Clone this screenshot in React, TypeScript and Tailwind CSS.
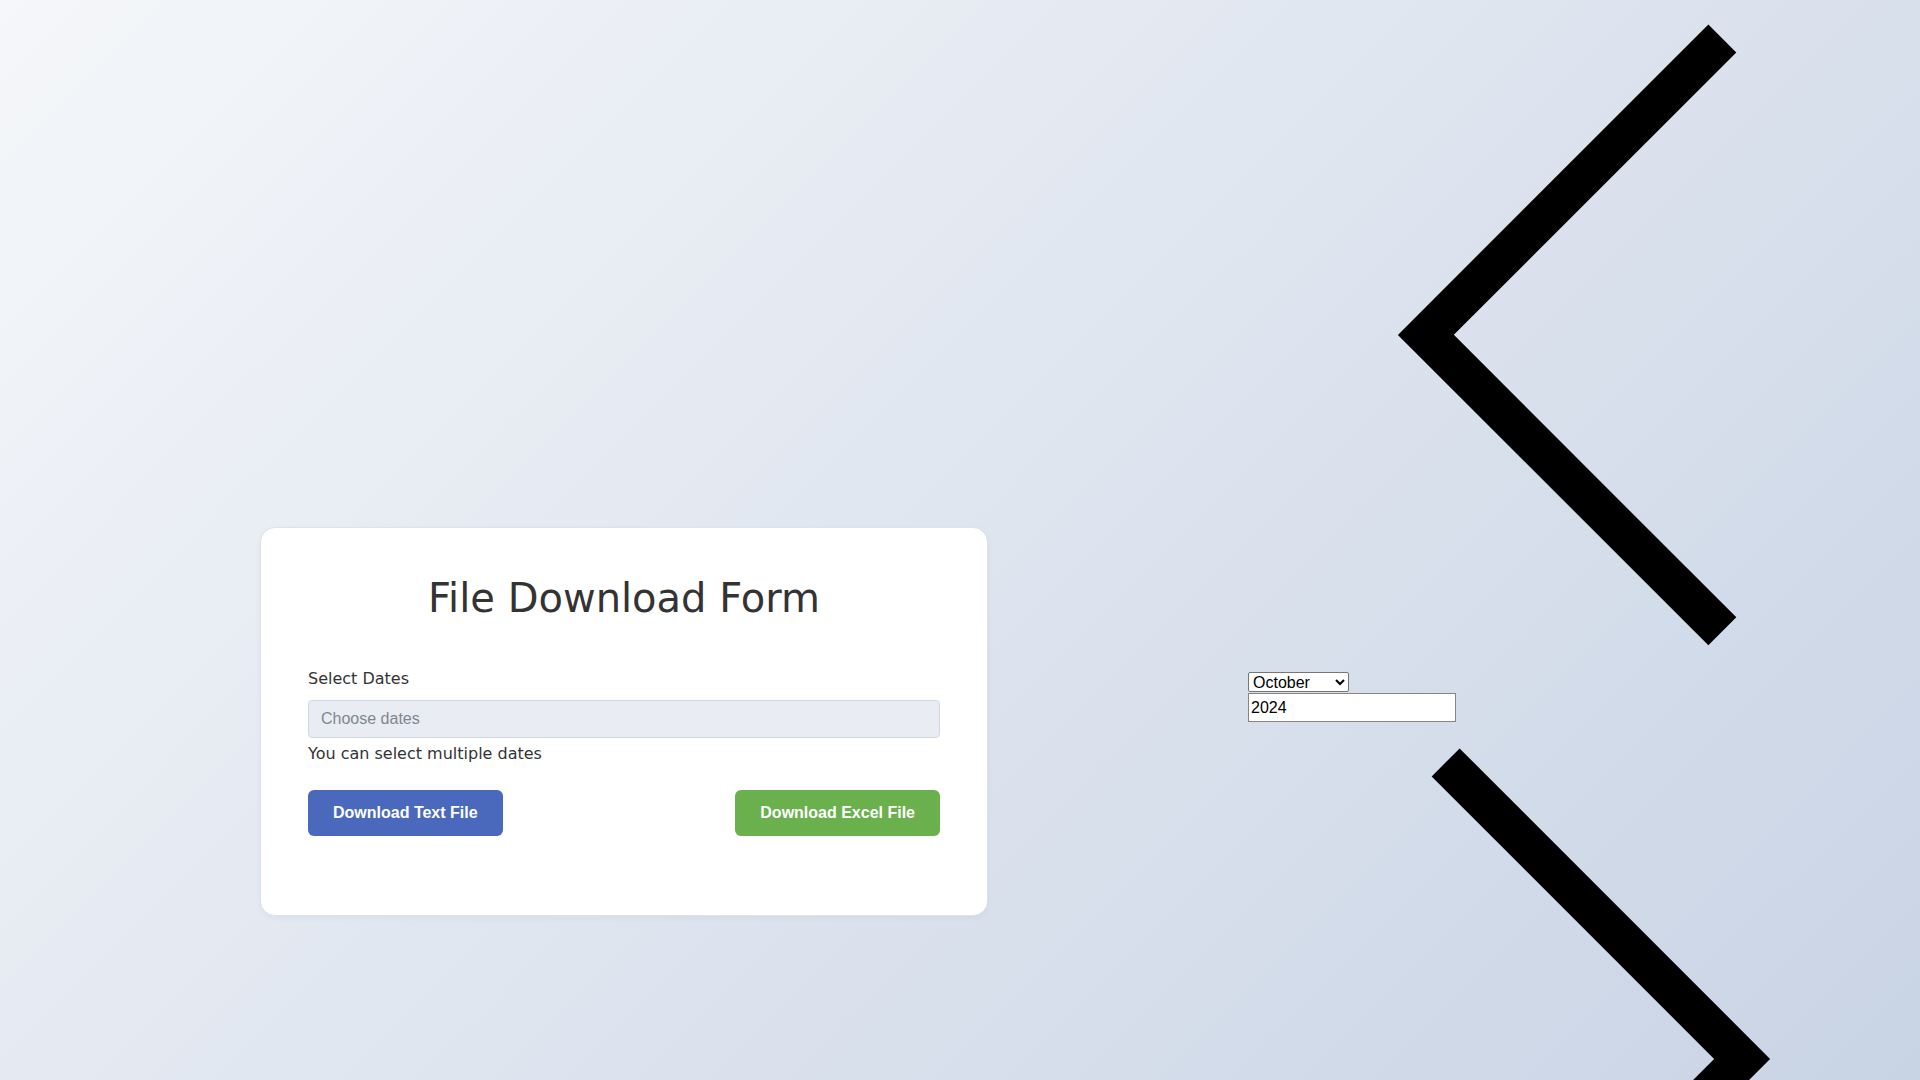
import React from 'react';

const months = [
  'January', 'February', 'March', 'April', 'May', 'June',
  'July', 'August', 'September', 'October', 'November', 'December',
];

const PrevArrow = () => (
  <svg viewBox="0 0 17 17" className="block w-[672px] h-[672px]" xmlns="http://www.w3.org/2000/svg">
    <path d="M5.207 8.471l7.146 7.147-0.707 0.707-7.854-7.853 7.854-7.854 0.707 0.707-7.146 7.146z" fill="#000" />
  </svg>
);

const NextArrow = () => (
  <svg viewBox="0 0 17 17" className="block w-[672px] h-[672px]" xmlns="http://www.w3.org/2000/svg">
    <path d="M13.207 8.472l-7.854 7.854-0.707-0.707 7.146-7.146-7.146-7.148 0.707-0.707 7.854 7.854z" fill="#000" />
  </svg>
);

export default function App() {
  return (
    <div className="min-h-[1443px] w-full flex items-center bg-[linear-gradient(135deg,#f5f7fa_0%,#c3cfe2_100%)]">
      {/* form column */}
      <div className="flex-1 flex justify-center">
        <div className="w-[728px] rounded-[15px] border border-[#dde3ea] bg-white px-[47px] pt-[47px] pb-[79px] shadow-[0_2px_6px_rgba(0,0,0,0.04)] font-['DejaVu_Sans',sans-serif] text-[#333]">
          <h1 className="text-center text-[40px] leading-[normal] font-normal">File Download Form</h1>

          <label className="block mt-[48px] text-[16px] leading-[normal]">Select Dates</label>
          <input
            type="text"
            readOnly
            placeholder="Choose dates"
            className="mt-[12px] block w-full h-[38px] rounded-[4px] border border-[#cfd7e4] bg-[#e9edf3] px-[12px] text-[16px] font-['Liberation_Sans',Arial,sans-serif] placeholder:text-[#80868f] outline-none"
          />
          <p className="mt-[6px] text-[16px] leading-[normal]">You can select multiple dates</p>

          <div className="mt-[27px] flex justify-between">
            <button className="h-[46px] rounded-md bg-[#4a69bd] px-[25px] text-[16px] font-bold text-white font-['Liberation_Sans',Arial,sans-serif]">
              Download Text File
            </button>
            <button className="h-[46px] rounded-md bg-[#6ab04c] px-[25px] text-[16px] font-bold text-white font-['Liberation_Sans',Arial,sans-serif]">
              Download Excel File
            </button>
          </div>
        </div>
      </div>

      {/* unstyled calendar column */}
      <div className="w-[672px] self-start flex flex-col items-start font-['Liberation_Sans',Arial,sans-serif] text-black">
        <PrevArrow />
        <select
          defaultValue="October"
          className="w-[101px] h-[20px] border border-[#767676] bg-white text-[16px] leading-[18px] rounded-[2px]"
        >
          {months.map((m) => (
            <option key={m} value={m}>{m}</option>
          ))}
        </select>
        <input
          type="text"
          defaultValue="2024"
          className="mt-px w-[208px] h-[29px] border border-[#858585] bg-white px-[2px] text-[16px] outline-none"
        />
        <div className="mt-[2px]">
          <NextArrow />
        </div>
      </div>
    </div>
  );
}
